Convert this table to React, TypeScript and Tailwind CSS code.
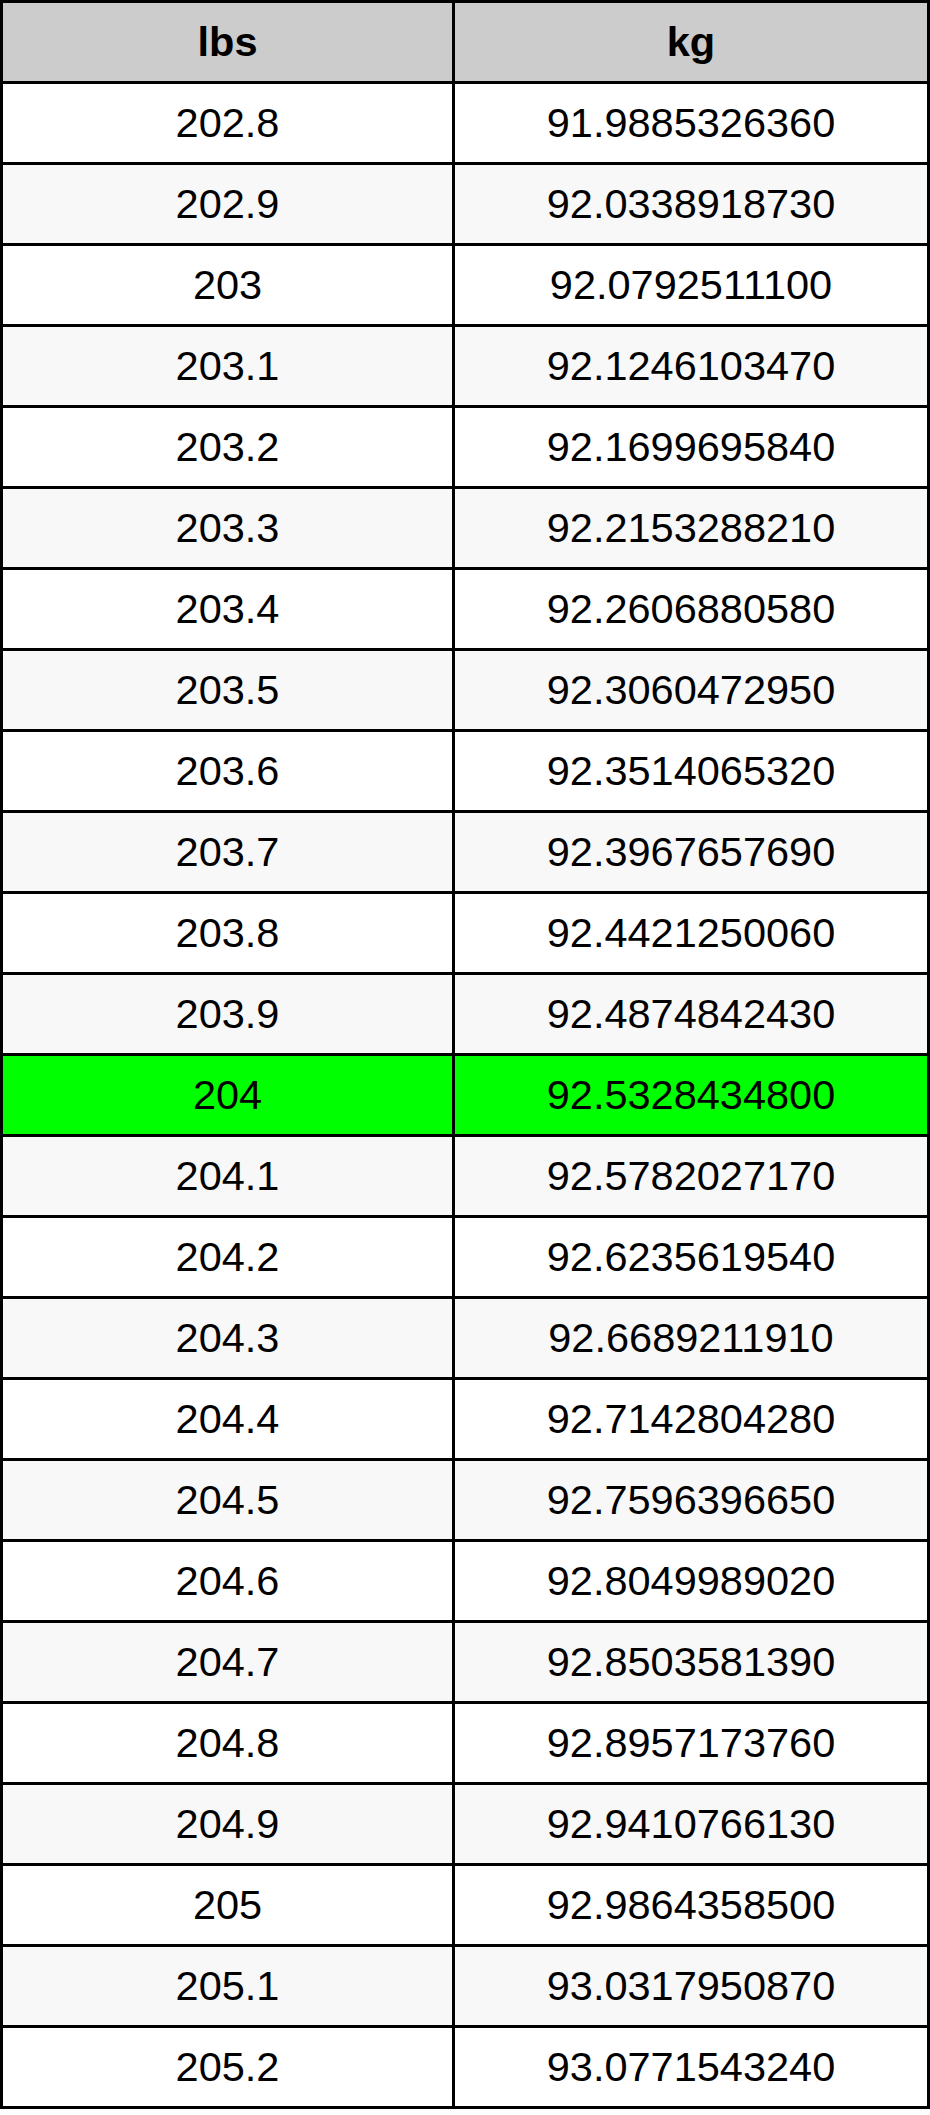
const rows: [string, string][] = [
  ["202.8", "91.9885326360"],
  ["202.9", "92.0338918730"],
  ["203", "92.0792511100"],
  ["203.1", "92.1246103470"],
  ["203.2", "92.1699695840"],
  ["203.3", "92.2153288210"],
  ["203.4", "92.2606880580"],
  ["203.5", "92.3060472950"],
  ["203.6", "92.3514065320"],
  ["203.7", "92.3967657690"],
  ["203.8", "92.4421250060"],
  ["203.9", "92.4874842430"],
  ["204", "92.5328434800"],
  ["204.1", "92.5782027170"],
  ["204.2", "92.6235619540"],
  ["204.3", "92.6689211910"],
  ["204.4", "92.7142804280"],
  ["204.5", "92.7596396650"],
  ["204.6", "92.8049989020"],
  ["204.7", "92.8503581390"],
  ["204.8", "92.8957173760"],
  ["204.9", "92.9410766130"],
  ["205", "92.9864358500"],
  ["205.1", "93.0317950870"],
  ["205.2", "93.0771543240"],
];

const App = () => {
  return (
    <div className="w-[930px] bg-white font-['Liberation_Sans',Arial,sans-serif] text-black">
      <div className="border-[3px] border-black">
        <div className="flex h-[78px] bg-[#cccccc] text-[41.5px] font-bold">
          <div className="flex w-[452px] items-center justify-center border-r-[3px] border-black">lbs</div>
          <div className="flex flex-1 items-center justify-center">kg</div>
        </div>
        {rows.map(([lbs, kg], i) => {
          const bg = lbs === "204" ? "bg-[#00ff00]" : i % 2 === 1 ? "bg-[#f8f8f8]" : "bg-white";
          return (
            <div key={lbs} className={`flex h-[81px] border-t-[3px] border-black text-[41.5px] ${bg}`}>
              <div className="flex w-[452px] items-center justify-center border-r-[3px] border-black">{lbs}</div>
              <div className="flex flex-1 items-center justify-center">{kg}</div>
            </div>
          );
        })}
      </div>
    </div>
  );
};

export default App;
